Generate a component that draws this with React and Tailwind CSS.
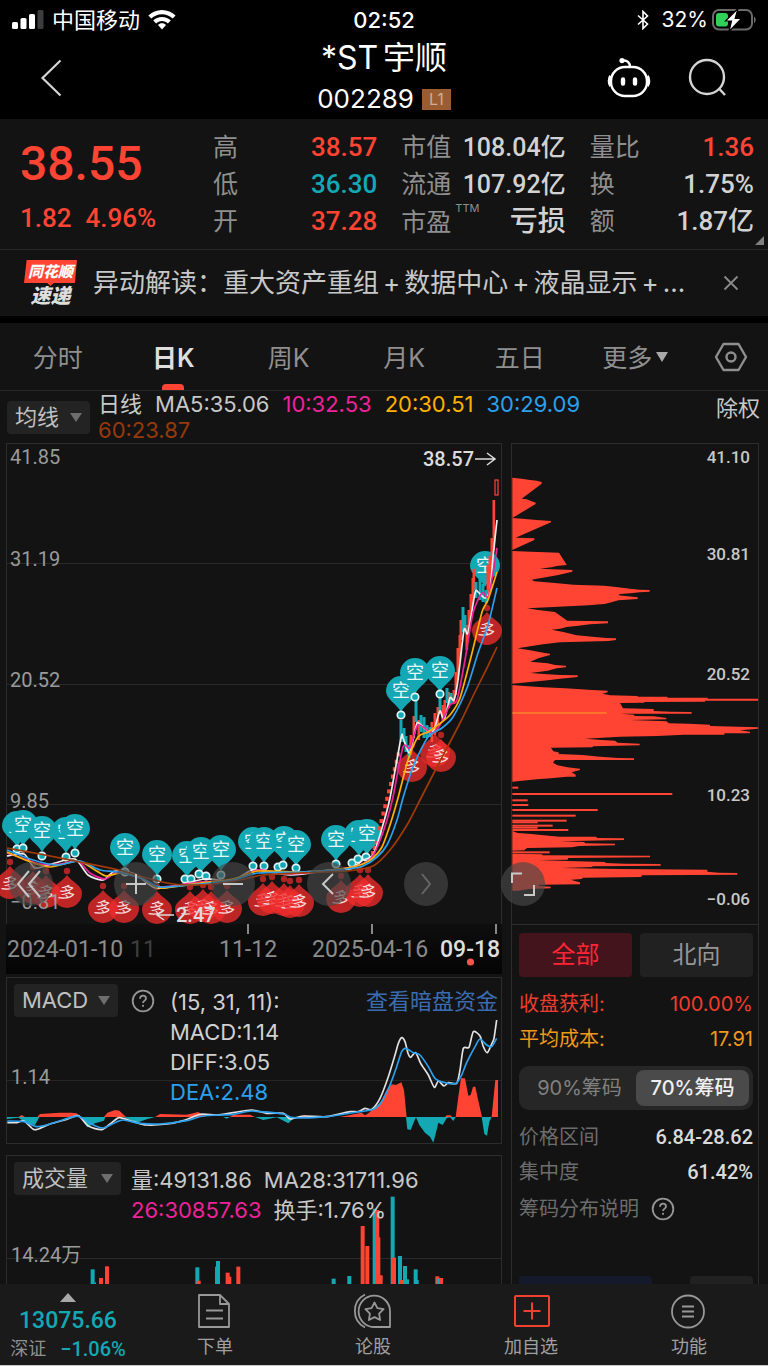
import React from "react";

const CJK = "font-['Inter','Noto_Sans_CJK_SC',sans-serif]";
const NUM = "font-['Roboto','Noto_Sans_CJK_SC',sans-serif]";
const RED = "#ff4433";
const TEAL = "#14a8b4";

function smooth(points) {
  const p = points.trim().split(/\s+/).map((s) => s.split(",").map(Number));
  let d = `M${p[0][0]},${p[0][1]}`;
  for (let i = 0; i < p.length - 1; i++) {
    const a = p[i - 1] || p[i];
    const b = p[i];
    const c = p[i + 1];
    const e = p[i + 2] || c;
    d += `C${b[0] + (c[0] - a[0]) / 8},${b[1] + (c[1] - a[1]) / 8} ${c[0] - (e[0] - b[0]) / 8},${c[1] - (e[1] - b[1]) / 8} ${c[0]},${c[1]}`;
  }
  return d;
}

/* ---------- header ---------- */

function StatusBar() {
  return (
    <div className="grid h-10 grid-cols-3 items-center px-3 text-white">
      <div className="flex items-center gap-2">
        <svg width="32" height="20" viewBox="0 0 32 20" fill="#fff">
          <rect x="0" y="12" width="6" height="7" rx="1.5" />
          <rect x="8.5" y="8" width="6" height="11" rx="1.5" />
          <rect x="17" y="4" width="6" height="15" rx="1.5" />
          <rect x="25.500" y="0" width="6" height="19" rx="1.500" fill="#3c3c3e" />
        </svg>
        <span className="text-[22px] leading-7">中国移动</span>
        <svg width="28" height="20" viewBox="0 0 28 20" fill="#fff">
          <path d="M14 0C8.700 0 3.900 2.100 .4 5.500l2.900 3.100C6.100 5.900 9.900 4.300 14 4.300s7.900 1.600 10.700 4.300l2.900-3.100C24.100 2.100 19.300 0 14 0Z" />
          <path d="M14 6.900c-3.400 0-6.500 1.300-8.800 3.500l2.900 3c1.500-1.500 3.600-2.400 5.900-2.400s4.400.9 5.900 2.400l2.900-3C20.500 8.200 17.400 6.900 14 6.900Z" />
          <path d="M14 13.300c-1.600 0-3 .6-4 1.600l4 4.700 4-4.700c-1-1-2.400-1.600-4-1.600Z" />
        </svg>
      </div>
      <span className="text-center text-[22px] font-medium leading-7">02:52</span>
      <div className="flex items-center justify-end gap-1">
        <svg className="mr-2" width="14" height="20" viewBox="0 0 12 20" fill="none" stroke="#fff" strokeWidth="1.600">
          <path d="M1 5.500 10.500 14 6 18.500v-17L10.500 6 1 14.500" />
        </svg>
        <span className="text-[21px] leading-7">32%</span>
        <svg width="44" height="24" viewBox="0 0 44 24">
          <rect x="1" y="2" width="39" height="19.500" rx="6" fill="none" stroke="#6b6b6d" strokeWidth="2" />
          <path d="M42 8.500c2.200 1 2.200 5.500 0 6.500Z" fill="#6b6b6d" />
          <rect x="4" y="5" width="12" height="13.500" rx="3" fill="#30d158" />
          <path d="M26 .5 13.500 13h6L17 23.500 29.500 10.500h-6.300L26 .5Z" fill="#fff" stroke="#000" strokeWidth="1.200" />
        </svg>
      </div>
    </div>
  );
}

function TitleBar() {
  return (
    <header className="grid h-[79px] grid-cols-[1fr_auto_1fr] text-white">
      <button aria-label="返回" className="mb-1 ml-9 flex size-11 items-center self-center">
        <svg width="28" height="40" viewBox="0 0 28 40" fill="none" stroke="#d4d4d4" strokeWidth="2.200">
          <path d="M24.500 2.500 6.500 20l18 17.500" />
        </svg>
      </button>
      <div className="flex flex-col items-center">
        <h1 className="text-[32px] leading-9">
          *ST <span className="-ml-1">宇顺</span>
        </h1>
        <div className="mt-2 flex items-center gap-2 text-[26px] leading-[30px]">
          <span>002289</span>
          <span className="bg-[#9a5d31] px-[7px] text-[16px] leading-[21px] text-[#cfae95]">L1</span>
        </div>
      </div>
      <div className="mb-1 mr-[39px] flex items-center justify-end gap-9">
        <button aria-label="助手">
          <svg width="44" height="42" viewBox="0 0 44 42" fill="none" stroke="#fff" strokeWidth="2.400">
            <rect x="4" y="10" width="36" height="29" rx="14" />
            <path d="M3.500 19c-2 2-2 8 0 10M40.500 19c2 2 2 8 0 10" strokeWidth="2.600" />
            <path d="M23 10c0-4.500-3-7-7-6.500" />
            <circle cx="15" cy="3.600" r="2.600" fill="#fff" stroke="none" />
            <path d="M16 22.500v4M28 22.500v4" strokeWidth="4.400" strokeLinecap="round" />
          </svg>
        </button>
        <button aria-label="搜索">
          <svg width="42" height="42" viewBox="0 0 42 42" fill="none" stroke="#d4d4d4" strokeWidth="2.400">
            <circle cx="20" cy="20" r="17" />
            <path d="m31.500 31 6.500 7" />
          </svg>
        </button>
      </div>
    </header>
  );
}

/* ---------- quote ---------- */

function QuoteCell({ label, sup, value, tone }) {
  return (
    <div className="flex items-center justify-between whitespace-nowrap leading-[37px]">
      <dt className="flex text-[25px] text-[#8f8f8f]">
        {label}
        {sup && <sup className="ml-1 mt-0.5 text-[11px] leading-4">{sup}</sup>}
      </dt>
      <dd className={`${NUM} text-[26px] font-medium ${tone}`}>{value}</dd>
    </div>
  );
}

const up = "text-[#ff4433]";
const down = "text-[#14a8b4]";
const flat = "text-[#d2d2d2]";
const cap = "text-[#d2d2d2] text-[25px]";

function QuotePanel() {
  return (
    <section className="relative grid h-[131px] grid-cols-[169px_1fr_1fr_1fr] gap-x-6 border-b border-[#282828] pl-5 pr-3.5 pt-2.5">
      <div className={`${NUM} ${up} whitespace-nowrap font-medium`}>
        <div className="text-[48px] leading-[70px]">38.55</div>
        <div className="mt-1 flex gap-3.5 text-[26px] leading-[30px]">
          <span>1.82</span>
          <span>4.96%</span>
        </div>
      </div>
      <dl>
        <QuoteCell label="高" value="38.57" tone={up} />
        <QuoteCell label="低" value="36.30" tone={down} />
        <QuoteCell label="开" value="37.28" tone={up} />
      </dl>
      <dl>
        <QuoteCell label="市值" value={<span className="text-[25px]">108.04亿</span>} tone={flat} />
        <QuoteCell label="流通" value={<span className="text-[25px]">107.92亿</span>} tone={flat} />
        <QuoteCell label="市盈" sup="TTM" value={<span className="text-[28px]">亏损</span>} tone={flat} />
      </dl>
      <dl>
        <QuoteCell label="量比" value="1.36" tone={up} />
        <QuoteCell label="换" value="1.75%" tone={flat} />
        <QuoteCell label="额" value="1.87亿" tone={flat} />
      </dl>
      <svg className="absolute bottom-1 right-1" width="9" height="9" viewBox="0 0 9 9">
        <path d="M9 0v9H0Z" fill="#808080" />
      </svg>
    </section>
  );
}

function NewsBar() {
  const topics = ["重大资产重组", "数据中心", "液晶显示"];
  return (
    <section className="flex h-[66px] items-center pl-6 pr-7">
      <div className="flex w-[53px] shrink-0 flex-col items-center font-black italic">
        <span className="h-[26px] w-full bg-[#ff4433] text-center text-[15px] leading-[23px] text-white [clip-path:polygon(5%_0,100%_0,96%_88%,56%_88%,50%_100%,44%_88%,0_88%)]">
          同花顺
        </span>
        <span className="text-[20px] leading-[20px] text-[#dedede]">速递</span>
      </div>
      <p className="ml-4 flex-1 whitespace-nowrap text-[26px] leading-9 text-[#c8c8c8]">
        异动解读：
        {topics.map((t) => (
          <span key={t}>
            {t}
            <span className="px-1">+</span>
          </span>
        ))}
        ...
      </p>
      <button aria-label="关闭">
        <svg width="18" height="18" viewBox="0 0 18 18" stroke="#8a8a8a" strokeWidth="1.800">
          <path d="m2.500 2.500 13 13m0-13-13 13" />
        </svg>
      </button>
    </section>
  );
}

function PeriodTabs() {
  const tabs = ["分时", "日K", "周K", "月K", "五日"];
  return (
    <nav className="flex h-[68px] border-b border-[#282828] text-[25px] text-[#8f8f8f]">
      {tabs.map((t) => (
        <button key={t} className="flex flex-1 flex-col items-center justify-end">
          <span className={t === "日K" ? "mb-2 font-semibold leading-9 text-[#dedede]" : "mb-2 leading-9"}>{t}</span>
          <span className={t === "日K" ? "h-[6px] w-[22px] rounded-t-sm bg-[#ff4433]" : "h-[6px] w-[22px]"} />
        </button>
      ))}
      <button className="flex flex-1 items-end justify-center gap-1 pb-3.5 leading-9">
        更多
        <svg className="mb-3.5" width="12" height="10" viewBox="0 0 12 10">
          <path d="M0 0h12L6 10Z" fill="#a8a8a8" />
        </svg>
      </button>
      <button aria-label="设置" className="flex w-[75px] items-center justify-center">
        <svg width="34" height="30" viewBox="0 0 34 30" fill="none" stroke="#8f8f8f" strokeWidth="2.400" strokeLinejoin="round">
          <path d="M9.500 2h15L32 15l-7.500 13h-15L2 15Z" />
          <circle cx="17" cy="15" r="4.500" />
        </svg>
      </button>
    </nav>
  );
}

function Chip({ label, text, className }) {
  return (
    <span className={`relative inline-flex h-[33px] shrink-0 items-center rounded bg-[#232323] ${className}`}>
      <select aria-label={label} className="h-full w-full appearance-none bg-transparent pl-2 text-[22px] leading-[33px] text-[#c0c0c0] outline-none">
        <option>{text}</option>
      </select>
      <svg className="pointer-events-none absolute right-2" width="12" height="9" viewBox="0 0 12 9">
        <path d="M0 0h12L6 9Z" fill="#6e6e6e" />
      </svg>
    </span>
  );
}

function AverageRow() {
  return (
    <div className="flex h-[52px] items-start pl-[7px] pr-2 text-[22px] leading-[26px]">
      <Chip label="指标" text="均线" className="mt-2.5 w-[83px]" />
      <div className="ml-2 flex flex-1 flex-wrap gap-x-[13px]">
        <span className="text-[#c8c8c8]">日线</span>
        <span className="text-[#c8c8c8]">MA5:35.06</span>
        <span className="text-[#ee2299]">10:32.53</span>
        <span className="text-[#ffb100]">20:30.51</span>
        <span className="text-[#2ba0ee]">30:29.09</span>
        <span className="basis-full text-[#963a0c]">60:23.87</span>
      </div>
      <button className="mt-1 text-[#c8c8c8]">除权</button>
    </div>
  );
}

/* ---------- candlestick chart ---------- */

const shorts = [
  [17, 826], [23, 825], [42, 831], [66, 832], [75, 829], [125, 848], [157, 855], [187, 856], [201, 852], [221, 850],
  [253, 842], [264, 842], [284, 841], [296, 845], [336, 840], [359, 835], [367, 834],
  [401, 691], [415, 673], [440, 671], [485, 566],
];
const rings = [
  [17, 849], [23, 848], [42, 856], [66, 857], [75, 853], [125, 872], [157, 879], [185, 879], [191, 879], [199, 874],
  [206, 876], [221, 875], [253, 866], [264, 866], [278, 867], [283, 865], [296, 868], [336, 864], [352, 863], [358, 859],
  [366, 857], [401, 715], [415, 697], [440, 694],
];
const longs = [
  [10, 884], [33, 889], [46, 893], [67, 893], [103, 908], [124, 908], [157, 909], [190, 909], [203, 907], [211, 909],
  [227, 908], [263, 901], [272, 899], [284, 901], [290, 903], [299, 902], [341, 898], [360, 892], [368, 892],
  [412, 767], [435, 752], [441, 757], [487, 630],
];
const greenBars = [
  [401, 720, 742], [404, 728, 742], [406, 736, 752], [409, 745, 758], [416, 698, 722], [421, 715, 732], [424, 717, 738], [427, 725, 738],
  [430, 727, 737], [440, 697, 712], [447, 688, 703], [451, 693, 704], [463, 607, 632], [465, 615, 630], [476, 582, 598],
  [480, 578, 600], [483, 584, 602], [486, 590, 603],
];
const redBars = [
  [411, 735, 755], [414, 716, 738], [419, 720, 740], [432, 722, 742], [435, 713, 735], [438, 707, 725], [443, 705, 720],
  [445, 700, 715], [449, 692, 708], [454, 690, 703], [456, 672, 695], [458, 648, 680], [460, 635, 662], [461, 620, 640],
  [467, 625, 650], [469, 610, 635], [471, 594, 620], [473, 578, 604], [474, 569, 590], [488, 565, 600], [490, 556, 590],
  [492, 538, 566], [494, 500, 550],
];

const ma = [
  ["#a13a06", "7,848 40,854 80,862 123,871 143,877 167,883 187,885 213,884 240,880 263,875 300,873 347,871 373,866 390,850 407,825 420,800 438,765 460,723 475,692 487,668 497,647"],
  ["#2ba0ee", "7,850 33,860 57,865 80,861 100,870 118,872 143,879 160,887 200,884 233,880 258,873 300,872 347,869 363,866 377,857 387,845 397,820 403,798 413,767 428,737 442,728 453,717 467,688 478,653 488,625 497,588"],
  ["#ffb100", "7,852 28,861 50,867 78,861 95,870 106,876 122,873 143,879 160,888 200,883 233,879 258,871 300,872 347,868 363,864 373,858 382,847 390,825 398,798 408,760 418,737 428,732 438,725 450,715 460,698 472,653 482,612 488,600 497,572"],
  ["#ee2299", "7,853 22,858 40,864 60,864 78,861 90,873 105,879 118,872 143,879 160,887 200,882 233,880 258,870 290,874 347,868 362,864 372,857 379,843 387,820 393,797 403,747 410,748 418,725 432,733 440,725 450,705 457,700 465,660 473,613 482,593 488,597 493,573 497,548"],
  ["#ededed", "7,856 24,854 35,868 55,863 75,859 88,875 103,880 115,871 135,874 155,888 180,885 205,879 233,881 253,870 292,875 330,870 350,869 363,860 373,855 382,828 390,798 401,738 403,738 409,753 413,740 417,723 421,725 431,733 435,727 440,711 444,720 450,698 454,700 458,680 464,630 468,633 475,593 478,592 485,598 490,590 493,557 497,520"],
];

function ShortPin({ x, y }) {
  return (
    <g>
      <path d={`M${x - 15},${y}a15,15 0 1 1 30,0c0,8 -10,12 -15,21c-5,-9 -15,-13 -15,-21Z`} fill="#14a8b4" />
      <text x={x} y={y + 6} fontSize="18" fill="#e8f6f7" textAnchor="middle">空</text>
    </g>
  );
}

function LongPin({ x, y }) {
  return (
    <g>
      <path d={`M${x - 15},${y}a15,15 0 1 0 30,0c0,-8 -10,-11 -15,-18c-5,7 -15,10 -15,18Z`} fill="#ee2c2c" fillOpacity="0.78" />
      <circle cx={x} cy={y - 22} r="3.200" fill="#ee2c2c" fillOpacity="0.700" />
      <text x={x} y={y + 6} fontSize="17" fill="#f6dede" textAnchor="middle" transform={`rotate(15 ${x} ${y})`}>多</text>
    </g>
  );
}

const zoomIcons = [
  ["上一页", "M20 9 9 22l11 13M31 9 20 22l11 13", "#c8c8c8"],
  ["放大", "M12 22h20M22 12v20", "#c8c8c8"],
  ["缩小", "M12 22h20", "#c8c8c8"],
  ["左移", "M26 12 16 22l10 10", "#c8c8c8"],
  ["右移", "M18 12l8 10-8 10", "#666666"],
  ["全屏", "M11 21v-9.500h10M23 33h10V23", "#c8c8c8"],
];

function KChart() {
  const ticks = [];
  for (let i = 0; i < 15; i++) ticks.push([370 + i * 1.9 - (i < 4 ? 1 : 0), 856 - i * (i < 4 ? 5 : 7.4)]);
  return (
    <div className="relative">
      <div className="border border-b-0 border-[#2c2c2c]">
        <svg className="block w-full overflow-visible" viewBox="7 444 494 480" fontFamily="Roboto, 'Noto Sans CJK SC', sans-serif">
          <path d="M7 563.500H501M7 684.500H501M7 804.500H501" stroke="#2a2a2a" />
          {shorts.map(([x, y], i) => <ShortPin key={i} x={x} y={y} />)}
          {longs.map(([x, y], i) => <LongPin key={i} x={x} y={y} />)}
          {ticks.map(([x, y], i) => <rect key={i} x={x} y={y} width="3.500" height="4" fill={RED} />)}
          {redBars.map(([x, a, b], i) => <rect key={i} x={x - 1.5} y={a} width="2.600" height={b - a} fill={RED} />)}
          {greenBars.map(([x, a, b], i) => <rect key={i} x={x - 1.5} y={a} width="3" height={b - a} fill={TEAL} />)}
          <rect x="495" y="480" width="3" height="15" fill="none" stroke={RED} strokeWidth="1.200" />
          {rings.map(([x, y], i) => (
            <circle key={i} cx={x} cy={y} r="3.700" fill="#14a8b4" stroke="#dff5f6" strokeWidth="1.700" />
          ))}
          {ma.slice().reverse().map(([c, p]) => (
            <path key={c} d={smooth(p)} fill="none" stroke={c} strokeWidth="1.700" strokeLinejoin="round" />
          ))}
          <g fontSize="20" fill="#9b9b9b">
            <text x="10" y="464">41.85</text>
            <text x="10" y="566">31.19</text>
            <text x="10" y="687">20.52</text>
            <text x="10" y="808">9.85</text>
            <text x="10" y="909">−0.81</text>
          </g>
          <g fill="#dcdcdc" fontSize="20" fontWeight="500">
            <text x="423" y="466">38.57</text>
            <text x="176" y="922">2.47</text>
          </g>
          <path d="M475 459h19m-7-6 8 6-8 6M174 915h-16m6-5-7 5 7 5" fill="none" stroke="#dcdcdc" strokeWidth="1.500" />
        </svg>
      </div>
      <div className="absolute -right-[43px] bottom-[18px] left-[3px] z-10 flex justify-between">
        {zoomIcons.map(([label, d, color], i) => (
          <button key={label} aria-label={label} className={i === 0 ? "mr-2 size-11 rounded-full bg-[#484848]/65" : "size-11 rounded-full bg-[#484848]/65"}>
            <svg width="44" height="44" viewBox="0 0 44 44" fill="none" stroke={color} strokeWidth="2">
              <path d={d} />
            </svg>
          </button>
        ))}
      </div>
    </div>
  );
}

function DateAxis() {
  return (
    <div className="bg-gradient-to-b from-[#0e0e0e] to-[#050505]">
      <svg className="block w-full" viewBox="6 924 496 50" fontFamily="Roboto, sans-serif" fontSize="23" fill="#8b8b8b">
        <path d="M248 924v10M372 924v10M496 924v10" stroke="#a8a8a8" strokeWidth="1.600" />
        <text x="7" y="957">2024-01-10</text>
        <text x="130" y="957" fill="#3f3f3f">11</text>
        <text x="219" y="957">11-12</text>
        <text x="312" y="957">2025-04-16</text>
        <text x="440" y="957" fontWeight="500" fill="#dedede">09-18</text>
        <circle cx="470.500" cy="962" r="3.600" fill="#ff5050" />
      </svg>
    </div>
  );
}

/* ---------- MACD ---------- */

const macdRed = [
  "55,441 65,435 75,441", "112,441 120,432 180,428 215,428 230,430 240,441", "312,441 322,428 345,420 358,422 378,441",
  "465,441 480,432 560,434 595,426 615,441", "690,441 700,434 750,434 765,441", "905,441 915,436 925,441",
  "1020,441 1085,428 1095,436 1105,430 1140,400 1160,360 1175,343 1188,345 1204,337 1212,360 1220,441",
  "1335,441 1340,436 1352,436 1356,441", "1367,441 1375,380 1383,325 1395,325 1405,377 1412,375 1419,350 1426,350 1434,388 1446,441",
  "1475,441 1482,370 1486,330 1494,330 1494,441",
];
const macdTeal = [
  "20,441 20,447 55,443 85,462 105,465 118,441", "240,441 262,472 285,460 312,452 316,441", "370,441 410,458 440,448 465,441",
  "670,441 680,446 690,441", "765,441 790,450 830,442 865,460 885,441",
  "1218,441 1222,478 1232,480 1242,455 1248,442 1258,465 1275,488 1290,500 1300,518 1310,480 1315,458 1328,465 1340,445 1350,442 1360,453 1367,441",
  "1445,441 1453,492 1461,497 1468,455 1475,441",
];
const diffLine =
  "22,458 50,458 72,453 100,478 115,477 150,462 200,448 235,437 265,468 305,479 330,462 358,443 400,455 440,465 500,462 550,452 600,433 650,435 700,428 755,420 800,430 850,430 870,447 910,438 980,440 1050,425 1075,425 1095,415 1115,418 1140,385 1165,320 1185,255 1195,220 1205,203 1215,215 1224,250 1232,262 1247,248 1262,280 1285,315 1303,352 1315,333 1332,348 1345,338 1370,340 1380,300 1390,235 1407,232 1420,185 1440,198 1450,230 1462,248 1475,222 1482,205 1490,150";
const deaLine =
  "22,453 72,455 110,470 150,462 220,440 240,440 280,465 310,474 345,458 370,450 420,460 480,462 560,452 610,438 700,433 755,423 850,432 880,443 980,440 1080,425 1120,418 1145,395 1170,345 1190,290 1205,245 1217,235 1240,248 1260,255 1285,290 1305,325 1335,338 1368,340 1385,315 1400,278 1425,230 1440,207 1460,225 1475,230 1490,205";

function HelpIcon() {
  return (
    <svg className="shrink-0" width="24" height="24" viewBox="0 0 24 24" fill="none" stroke="#969696" strokeWidth="1.800">
      <circle cx="12" cy="12" r="10.300" />
      <path d="M9 9.700c0-1.900 1.300-3 3-3s3 1.100 3 2.800c0 2-3 2.300-3 4.500" />
      <circle cx="12" cy="16.800" r="1.100" fill="#969696" stroke="none" />
    </svg>
  );
}

function MacdPanel() {
  return (
    <section className="mt-[3px] grid border border-[#2c2c2c]">
      <svg className="col-start-1 row-start-1 block w-full" viewBox="7 978 494 165">
        <path d="M7 1080.500H501" stroke="#262626" />
        <g transform="translate(0 970) scale(.33333)" fill="none" strokeWidth="5" strokeLinejoin="round">
          {macdRed.map((p) => <polygon key={p} points={p} fill={RED} />)}
          {macdTeal.map((p) => <polygon key={p} points={p} fill={TEAL} />)}
          <path d={smooth(diffLine)} stroke="#e2e2e2" />
          <path d={smooth(deaLine)} stroke="#2ba0ee" />
        </g>
        <text x="11" y="1084" fontSize="20" fill="#9b9b9b" fontFamily="Roboto, sans-serif">1.14</text>
      </svg>
      <div className="col-start-1 row-start-1 flex items-start pl-[7px] pr-[3px] pt-1.5 text-[22px] leading-[30px] text-[#d0d0d0]">
        <Chip label="副图指标" text="MACD" className="w-[104px]" />
        <button aria-label="MACD说明" className="ml-[13px] mt-[5px]">
          <HelpIcon />
        </button>
        <div className="ml-[15px] mt-[3px] flex-1">
          <div>(15, 31, 11):</div>
          <div>MACD:1.14</div>
          <div>DIFF:3.05</div>
          <div className="text-[#2ba0ee]">DEA:2.48</div>
        </div>
        <a href="#dark-pool" className="mt-0.5 text-[#3b6cb0]">查看暗盘资金</a>
      </div>
    </section>
  );
}

/* ---------- volume ---------- */

const volume = [
  [272, 12, 358, 0], [284, 4, 397, 0], [297, 12, 384, 1], [315, 12, 349, 1], [586, 12, 352, 0], [590, 12, 392, 1], [645, 7, 350, 1],
  [648, 12, 333, 0], [677, 12, 368, 1], [686, 8, 380, 1], [709, 12, 350, 1], [995, 12, 386, 0], [1042, 12, 378, 0],
  [1082, 12, 228, 1], [1096, 12, 288, 1], [1118, 12, 176, 0], [1126, 12, 180, 1], [1131, 10, 262, 1], [1140, 8, 376, 1],
  [1172, 12, 140, 0], [1176, 12, 323, 1], [1194, 12, 318, 0], [1200, 11, 390, 1], [1209, 12, 348, 0], [1220, 7, 388, 0],
  [1241, 12, 358, 0], [1250, 6, 390, 0], [1306, 12, 379, 1], [1310, 8, 386, 0], [1317, 12, 384, 1],
];

function VolumePanel() {
  return (
    <section className="mt-[11px] grid border border-[#2c2c2c]">
      <svg className="col-start-1 row-start-1 block w-full" viewBox="7 1156 494 150">
        <path d="M7 1258.500H501" stroke="#2a2a2a" />
        <g transform="translate(0 1150) scale(.33333)">
          {volume.map(([x, w, y, isUp], i) => (
            <rect key={i} x={x} y={y} width={w} height={470 - y} fill={isUp ? RED : TEAL} />
          ))}
        </g>
        <text x="11" y="1262" fontSize="20" fill="#9b9b9b" fontFamily="Roboto, 'Noto Sans CJK SC', sans-serif">14.24万</text>
      </svg>
      <div className="col-start-1 row-start-1 flex items-start pl-[7px] pt-1.5 text-[22px] leading-[30px] text-[#c8c8c8]">
        <Chip label="成交量指标" text="成交量" className="w-[107px]" />
        <div className="ml-2.5 mt-[3px]">
          <div className="flex gap-3">
            <span>量:49131.86</span>
            <span>MA28:31711.96</span>
          </div>
          <div className="flex gap-3">
            <span className="text-[#ee2299]">26:30857.63</span>
            <span>换手:1.76%</span>
          </div>
        </div>
      </div>
    </section>
  );
}

/* ---------- chip distribution ---------- */

const chipShape =
  "22,113 50,116 75,120 95,122 110,126 110,131 50,176 65,178 80,184 92,188 92,192 22,234 52,236 95,240 138,243 138,247 32,293 88,295 88,300 22,330 22,333 78,335 162,338 182,370 185,375 155,378 140,382 104,386 140,388 202,390 202,395 160,405 80,419 88,424 150,429 205,434 298,437 340,442 375,446 404,449 434,450 434,455 404,457 375,460 345,462 340,466 368,469 398,472 398,477 340,481 320,487 298,492 250,496 205,498 145,501 66,505 100,510 150,516 187,542 309,544 309,550 255,553 220,557 185,561 165,566 140,569 175,576 215,586 270,591 305,594 333,595 333,600 310,603 225,605 165,607 115,613 75,619 38,625 75,631 115,638 135,641 135,645 100,655 76,665 128,670 150,675 183,677 183,682 155,685 128,692 76,699 128,703 165,705 218,706 218,711 165,716 128,721 75,726 22,731 22,735 58,738 115,742 180,745 262,750 308,752 308,757 292,761 315,766 398,768 398,770 487,770 487,773 608,773 608,776 766,776 766,782 600,782 600,785 418,786 418,788 345,789 354,805 446,807 446,813 496,815 560,816 560,821 345,821 388,824 388,828 446,829 484,834 484,838 374,840 440,842 484,844 492,850 550,851 615,854 615,858 700,860 761,862 761,866 705,871 735,875 735,880 658,880 658,884 537,884 458,888 345,890 240,896 280,899 330,902 338,908 404,911 404,916 265,919 262,922 138,923 145,934 160,937 162,942 232,945 285,950 340,954 387,955 387,960 150,960 144,968 158,976 187,982 225,986 225,990 200,997 212,1004 212,1010 185,1010 138,1015 95,1018 52,1022 22,1025";
const chipLower =
  "22,1173 38,1179 80,1182 115,1186 165,1190 275,1190 275,1194 357,1195 357,1200 165,1204 238,1206 240,1210 330,1211 330,1216 222,1218 200,1222 66,1224 58,1231 22,1232";
const chipBottom =
  "22,1241 112,1243 112,1246 435,1247 435,1252 190,1254 188,1259 98,1260 188,1263 300,1266 302,1269 360,1271 467,1272 467,1277 262,1279 262,1281 170,1284 342,1287 607,1289 607,1295 640,1298 697,1299 697,1304 412,1306 408,1311 234,1313 230,1317 198,1319 212,1324 225,1327 225,1333 102,1334 102,1338 137,1340 137,1345 70,1347 40,1352 22,1352";
const chipBars = [
  [1040, 40], [1059, 502], [1078, 68], [1092, 70], [1107, 278], [1124, 212], [1139, 185], [1144, 98], [1154, 143], [1160, 98], [1167, 190], [1234, 134],
];

function ChipChart() {
  return (
    <svg className="block w-full border-b border-[#2c2c2c]" viewBox="512 444 246 480">
      <g transform="translate(505 440) scale(.33333)" fill="#ff4433">
        <polygon points={chipShape} />
        <polygon points={chipLower} />
        <polygon points={chipBottom} />
        {chipBars.map(([y, x]) => <rect key={y} x="22" y={y} width={x - 22} height="6" />)}
        <rect x="22" y="817" width="283" height="4" fill="#ff8a2a" />
      </g>
      <g fontFamily="Roboto, sans-serif" fontSize="17" fontWeight="500" fill="#c8c8c8" textAnchor="end">
        <text x="750" y="463">41.10</text>
        <text x="750" y="560">30.81</text>
        <text x="750" y="680">20.52</text>
        <text x="750" y="801">10.23</text>
        <text x="750" y="905">−0.06</text>
      </g>
    </svg>
  );
}

function ChipPanel() {
  return (
    <aside className="border border-b-0 border-[#2c2c2c]">
      <ChipChart />
      <div className="pl-[7px] pr-[5px] pt-2 text-[20px]">
        <div className="grid grid-cols-2 gap-2 text-[24px] leading-[44px]">
          <button className="rounded-sm bg-[#43141b] text-[#ff2436]">全部</button>
          <button className="rounded-sm bg-[#212121] text-[#969696]">北向</button>
        </div>
        <dl className="mt-[10px] leading-[35px]">
          <div className="flex justify-between text-[#ee3d2e]">
            <dt>收盘获利:</dt>
            <dd>100.00%</dd>
          </div>
          <div className="flex justify-between text-[#f0981a]">
            <dt>平均成本:</dt>
            <dd>17.91</dd>
          </div>
        </dl>
        <div className="mt-[9px] flex rounded-[10px] bg-[#262626] p-1 leading-9">
          <button className="flex-1 whitespace-nowrap text-[#808080]">90%筹码</button>
          <button className="flex-1 whitespace-nowrap rounded-lg bg-[#4a4a4a] font-medium text-[#f0f0f0]">70%筹码</button>
        </div>
        <dl className="mt-[10px] leading-[35px] text-[#6c6c6c]">
          <div className="flex justify-between">
            <dt>价格区间</dt>
            <dd className={`${NUM} font-medium text-[#dadada]`}>6.84-28.62</dd>
          </div>
          <div className="flex justify-between">
            <dt>集中度</dt>
            <dd className={`${NUM} font-medium text-[#dadada]`}>61.42%</dd>
          </div>
        </dl>
        <button className="flex items-center gap-3 leading-[38px] text-[#6c6c6c]">
          筹码分布说明
          <HelpIcon />
        </button>
        <div className="mt-12 flex justify-between">
          <div className="h-10 w-[133px] rounded-sm bg-[#141a2c]" />
          <div className="h-10 w-[63px] rounded-sm bg-[#212121]" />
        </div>
      </div>
    </aside>
  );
}

/* ---------- bottom navigation ---------- */

function NavItem({ label, children }) {
  return (
    <a href="#nav" className="flex flex-1 flex-col items-center gap-[3px] pt-2 text-[18px] leading-7 text-[#a0a0a0]">
      <svg width="40" height="38" viewBox="0 0 40 38" fill="none" stroke="#989898" strokeWidth="1.800" strokeLinejoin="round">
        {children}
      </svg>
      {label}
    </a>
  );
}

function BottomNav() {
  return (
    <nav className="flex h-[82px] shrink-0 border-b border-[#c8c8c8] bg-[#1a1a1a]">
      <a href="#index" className={`${NUM} flex w-[136px] flex-col items-center pt-[9px] text-[#14a8b4]`}>
        <svg width="16" height="9" viewBox="0 0 16 9">
          <path d="M8 0l8 9H0Z" fill="#a8a8a8" />
        </svg>
        <span className="mt-[3px] text-[23px] font-medium leading-[32px]">13075.66</span>
        <span className="flex gap-3.5 text-[20px] font-medium leading-6">
          <span className="text-[18px] font-normal text-[#8f8f8f]">深证</span>−1.06%
        </span>
      </a>
      <NavItem label="下单">
        <path d="M4 3h21l9 9v23H4ZM25 3v9h9M11 18.500h17M11 26.500h17" />
      </NavItem>
      <NavItem label="论股">
        <path d="M37 35H22A15.700 15.700 0 1 1 37 19.500ZM12 2.500a18.500 18.500 0 0 0 0 33" />
        <path d="m21.500 10.500 2.900 5.700 6.200 1-4.500 4.500 1 6.300-5.600-2.900-5.600 2.900 1-6.300-4.500-4.500 6.200-1Z" />
      </NavItem>
      <NavItem label="加自选">
        <g stroke="#f04030" strokeWidth="2">
          <rect x="4" y="4" width="34" height="30" rx="1" />
          <path d="M12.500 19h17M21 10.500v17" />
        </g>
      </NavItem>
      <NavItem label="功能">
        <circle cx="19" cy="19.500" r="16" />
        <path d="M13 14.500h12M13 19.500h12M13 24.500h12" />
      </NavItem>
    </nav>
  );
}

export default function App() {
  return (
    <div className={`${CJK} flex h-screen flex-col overflow-hidden bg-[#131313]`}>
      <div className="shrink-0 bg-black">
        <StatusBar />
        <TitleBar />
      </div>
      <main className="min-h-0 flex-1 overflow-hidden">
        <QuotePanel />
        <NewsBar />
        <div className="h-[7px] bg-black" />
        <PeriodTabs />
        <AverageRow />
        <div className="grid grid-cols-[2fr_1fr] gap-[9px] pl-1.5 pr-[9px]">
          <div className="min-w-0">
            <KChart />
            <DateAxis />
            <MacdPanel />
            <VolumePanel />
          </div>
          <ChipPanel />
        </div>
      </main>
      <BottomNav />
    </div>
  );
}
